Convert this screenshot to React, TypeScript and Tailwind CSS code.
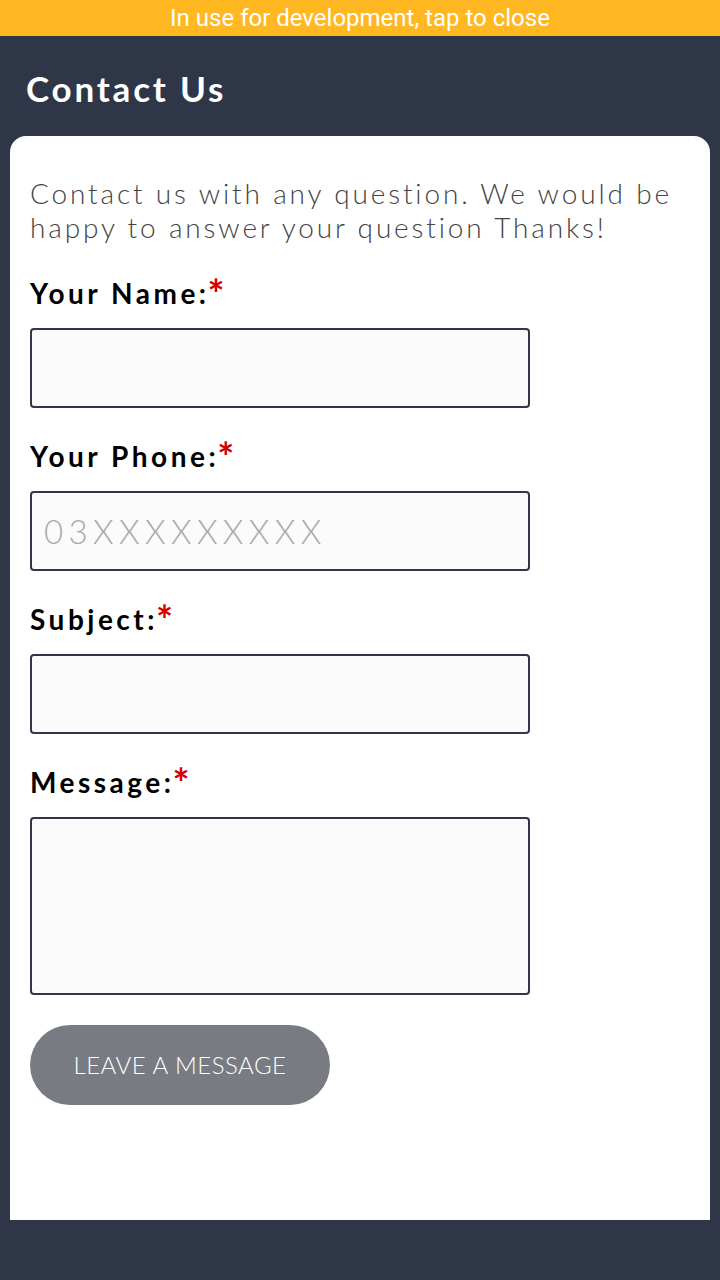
import React from 'react';

const fields = [
  { label: 'Your Name:', placeholder: '', tall: false },
  { label: 'Your Phone:', placeholder: '03XXXXXXXXX', tall: false },
  { label: 'Subject:', placeholder: '', tall: false },
  { label: 'Message:', placeholder: '', tall: true },
];

export default function App() {
  return (
    <div className="min-h-[1280px] bg-[#2e3648] flex flex-col font-['Lato',sans-serif]">
      <div className="h-9 bg-[#ffb822] flex items-center justify-center text-white text-[24px] font-['Roboto',sans-serif]">
        In use for development, tap to close
      </div>

      <h1 className="px-[26px] pt-[32px] h-[100px] text-white text-[35px] font-bold tracking-[2.8px] leading-[40px]">
        Contact Us
      </h1>

      <div className="mx-[10px] h-[1084px] bg-white rounded-t-[16px] px-5 pt-[40px]">
        <p className="text-[#444] text-[28px] font-light leading-[34px] tracking-[2.85px]">
          Contact us with any question. We would be happy to answer your question Thanks!
        </p>

        <form className="mt-[24px] flex flex-col gap-[23px]" onSubmit={(e) => e.preventDefault()}>
          {fields.map((f) => (
            <div key={f.label} className="flex flex-col">
              <label className="h-[50px] flex items-center text-black text-[28px] font-bold tracking-[3.5px]">
                {f.label}
                <span className="text-[#d40000] text-[40px] leading-none self-start mt-[6px] -ml-[2px] tracking-normal">*</span>
              </label>
              {f.tall ? (
                <textarea className="mt-[10px] w-[500px] h-[178px] bg-[#fbfbfb] border-2 border-[#2e3648] rounded-[4px] resize-none outline-none" />
              ) : (
                <input
                  placeholder={f.placeholder}
                  className="mt-[10px] w-[500px] h-[80px] px-3 bg-[#fbfbfb] border-2 border-[#2e3648] rounded-[4px] text-[33px] font-light tracking-[5.4px] placeholder:text-[#aaa] outline-none"
                />
              )}
            </div>
          ))}

          <button
            type="submit"
            className="mt-[7px] w-[300px] h-[80px] rounded-full bg-[#787b82] text-white text-[24px] font-light tracking-[0.5px] uppercase"
          >
            Leave a message
          </button>
        </form>
      </div>
    </div>
  );
}
